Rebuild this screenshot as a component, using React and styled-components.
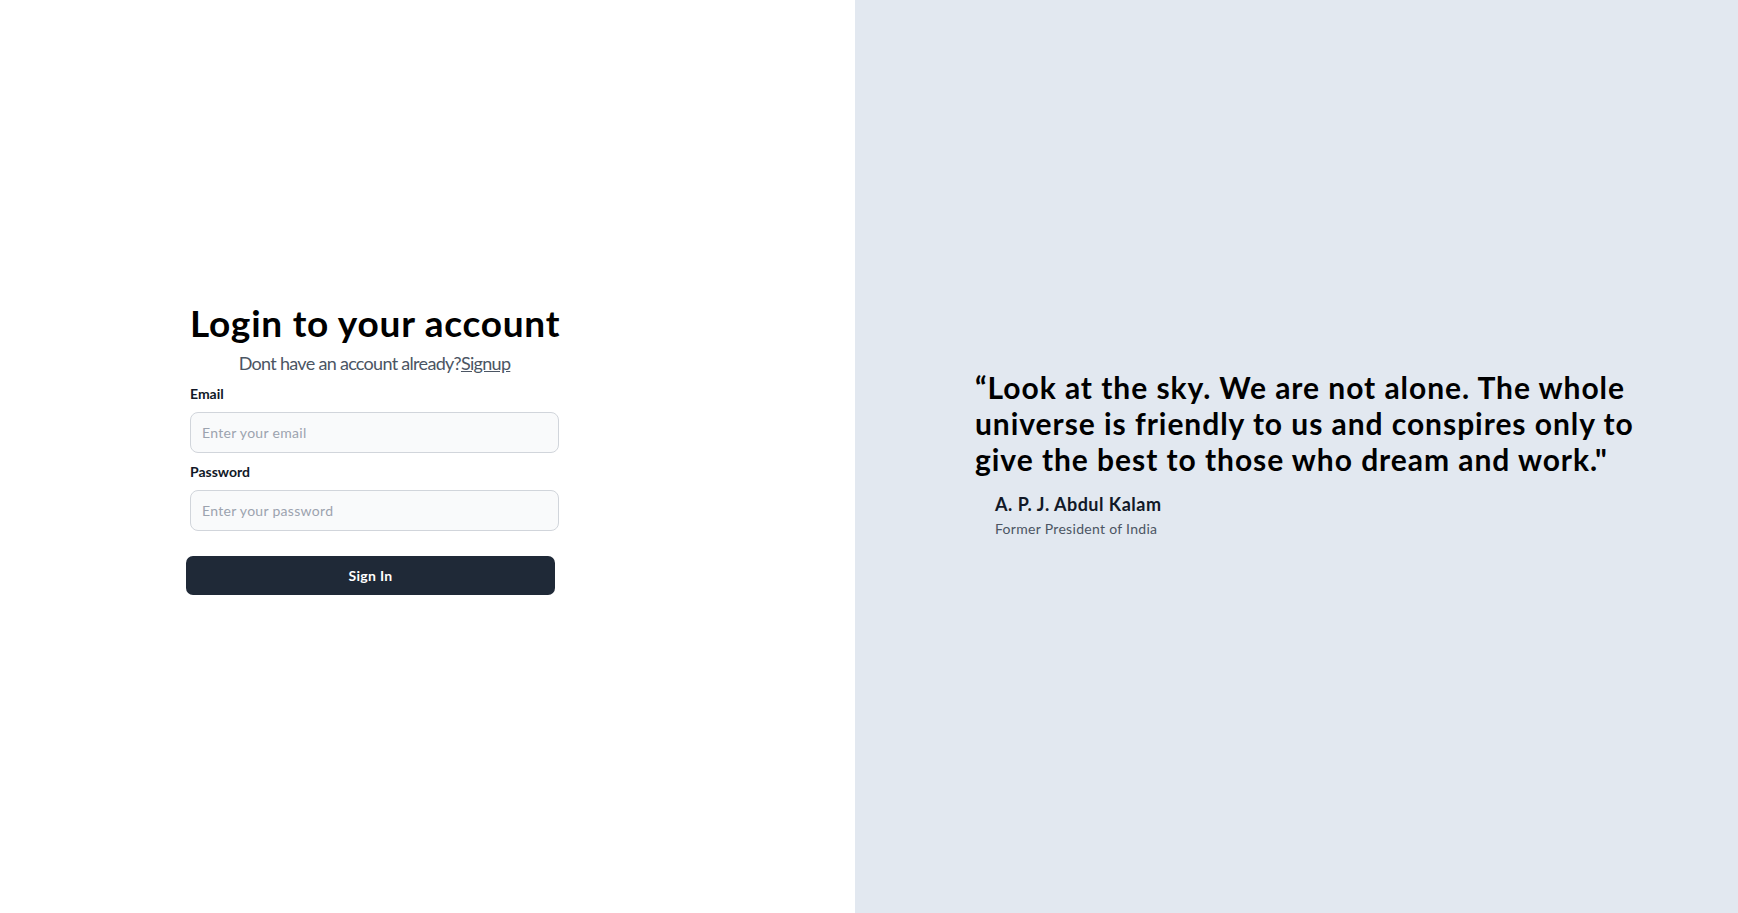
import React from "react";
import styled, { createGlobalStyle } from "styled-components";

const GlobalStyle = createGlobalStyle`
  html, body {
    margin: 0;
    padding: 0;
  }
  body {
    font-family: Lato, "Noto Sans", sans-serif;
    background: #ffffff;
    color: #111827;
  }
  * {
    box-sizing: border-box;
  }
`;

export default function App() {
  return (
    <>
      <GlobalStyle />
      <Page>
        <LeftPanel>
          <Form onSubmit={(e) => e.preventDefault()}>
            <Title>Login to your account</Title>
            <Subtitle>
              Dont have an account already?<SignupLink href="#">Signup</SignupLink>
            </Subtitle>
            <Field>
              <Label htmlFor="email">Email</Label>
              <Input id="email" type="email" placeholder="Enter your email" />
            </Field>
            <Field>
              <Label htmlFor="password">Password</Label>
              <Input id="password" type="password" placeholder="Enter your password" />
            </Field>
            <Button type="submit">Sign In</Button>
          </Form>
        </LeftPanel>
        <RightPanel>
          <QuoteBlock>
            <Quote>
              “Look at the sky. We are not alone. The whole universe is friendly to us and conspires only to give the best to those who dream and work."
            </Quote>
            <Author>A. P. J. Abdul Kalam</Author>
            <Role>Former President of India</Role>
          </QuoteBlock>
        </RightPanel>
      </Page>
    </>
  );
}

const Page = styled.div`
  display: flex;
  height: 100vh;
  width: 100%;
`;

const LeftPanel = styled.div`
  width: 855px;
  flex-shrink: 0;
  display: flex;
  align-items: center;
  padding-left: 190px;
  padding-bottom: 15px;
`;

const Form = styled.form`
  width: 369px;
  display: flex;
  flex-direction: column;
`;

const Title = styled.h1`
  margin: 0;
  font-size: 37px;
  line-height: 40px;
  font-weight: 700;
  letter-spacing: 0.75px;
  color: #000;
  text-align: center;
  white-space: nowrap;
`;

const Subtitle = styled.p`
  margin: 6px 0 7px;
  font-size: 18px;
  line-height: 28px;
  font-weight: 400;
  letter-spacing: -0.7px;
  color: #4b5563;
  text-align: center;
`;

const SignupLink = styled.a`
  color: #4b5563;
  text-decoration: underline;
`;

const Field = styled.div`
  display: flex;
  flex-direction: column;
  margin-bottom: 9px;
`;

const Label = styled.label`
  font-size: 14px;
  line-height: 20px;
  font-weight: 700;
  color: #111827;
  margin-bottom: 8px;
`;

const Input = styled.input`
  height: 41px;
  width: 100%;
  padding: 0 11px;
  font-family: inherit;
  font-size: 14px;
  letter-spacing: 0.3px;
  color: #111827;
  background: #f9fafb;
  border: 1px solid #d1d5db;
  border-radius: 8px;
  outline: none;

  &::placeholder {
    color: #9ca3af;
  }
`;

const Button = styled.button`
  margin: 16px 0 0 -4px;
  width: 369px;
  height: 39px;
  background: #1f2937;
  color: #ffffff;
  border: none;
  border-radius: 7px;
  font-family: inherit;
  font-size: 14px;
  font-weight: 700;
  letter-spacing: 0.3px;
  cursor: pointer;
`;

const RightPanel = styled.div`
  flex: 1;
  background: #e2e8f0;
  display: flex;
  align-items: center;
  padding-left: 120px;
  padding-bottom: 6px;
`;

const QuoteBlock = styled.div`
  width: 680px;
`;

const Quote = styled.blockquote`
  margin: 0 0 13px;
  font-size: 30px;
  line-height: 36px;
  font-weight: 700;
  letter-spacing: 0.95px;
  color: #000;
`;

const Author = styled.div`
  padding-left: 20px;
  font-size: 18px;
  line-height: 28px;
  font-weight: 700;
  letter-spacing: 0.5px;
  color: #111827;
`;

const Role = styled.div`
  margin-top: 1px;
  padding-left: 20px;
  font-size: 14px;
  line-height: 20px;
  letter-spacing: 0.3px;
  color: #4b5563;
`;
